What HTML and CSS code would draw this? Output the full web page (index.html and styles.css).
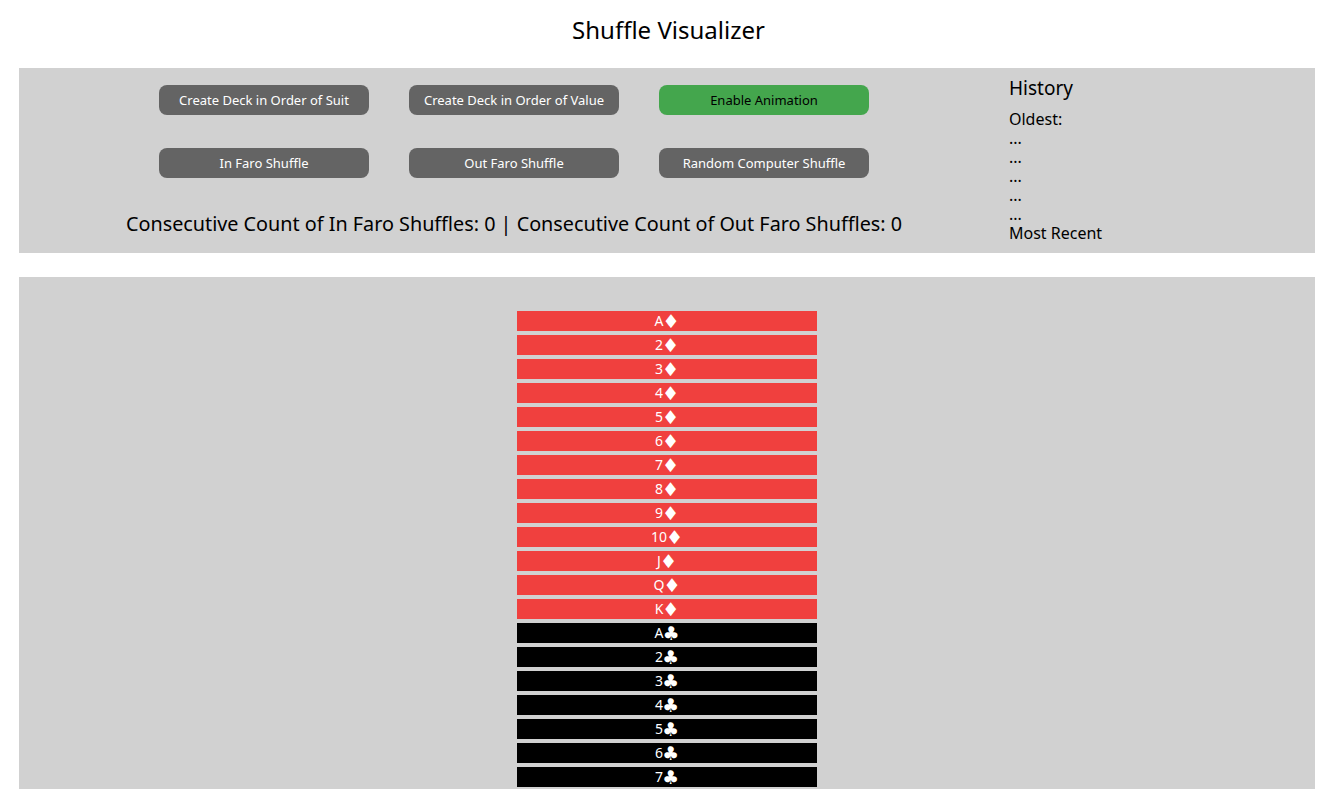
FILE: index.html
```html
<!DOCTYPE html>
<html>
<head>
<meta charset="utf-8">
<title>Shuffle Visualizer</title>
<link rel="stylesheet" href="styles.css">
</head>
<body>
<h1 class="title">Shuffle Visualizer</h1>
<section class="panel controls">
  <div class="main">
    <div class="buttons">
      <button class="btn">Create Deck in Order of Suit</button>
      <button class="btn">Create Deck in Order of Value</button>
      <button class="btn btn-green">Enable Animation</button>
      <button class="btn">In Faro Shuffle</button>
      <button class="btn">Out Faro Shuffle</button>
      <button class="btn">Random Computer Shuffle</button>
    </div>
    <p class="count">Consecutive Count of In Faro Shuffles: 0 | Consecutive Count of Out Faro Shuffles: 0</p>
  </div>
  <div class="history">
    <h2 class="history-title">History</h2>
    <ul class="history-list">
      <li>Oldest:</li>
      <li>...</li>
      <li>...</li>
      <li>...</li>
      <li>...</li>
      <li>...</li>
      <li>Most Recent</li>
    </ul>
  </div>
</section>
<section class="panel deck">
  <div class="card red">A<span class="suit">♦</span></div>
  <div class="card red">2<span class="suit">♦</span></div>
  <div class="card red">3<span class="suit">♦</span></div>
  <div class="card red">4<span class="suit">♦</span></div>
  <div class="card red">5<span class="suit">♦</span></div>
  <div class="card red">6<span class="suit">♦</span></div>
  <div class="card red">7<span class="suit">♦</span></div>
  <div class="card red">8<span class="suit">♦</span></div>
  <div class="card red">9<span class="suit">♦</span></div>
  <div class="card red">10<span class="suit">♦</span></div>
  <div class="card red">J<span class="suit">♦</span></div>
  <div class="card red">Q<span class="suit">♦</span></div>
  <div class="card red">K<span class="suit">♦</span></div>
  <div class="card black">A<span class="suit">♣</span></div>
  <div class="card black">2<span class="suit">♣</span></div>
  <div class="card black">3<span class="suit">♣</span></div>
  <div class="card black">4<span class="suit">♣</span></div>
  <div class="card black">5<span class="suit">♣</span></div>
  <div class="card black">6<span class="suit">♣</span></div>
  <div class="card black">7<span class="suit">♣</span></div>
  <div class="card black">8<span class="suit">♣</span></div>
  <div class="card black">9<span class="suit">♣</span></div>
  <div class="card black">10<span class="suit">♣</span></div>
  <div class="card black">J<span class="suit">♣</span></div>
  <div class="card black">Q<span class="suit">♣</span></div>
  <div class="card black">K<span class="suit">♣</span></div>
  <div class="card red">A<span class="suit">♥</span></div>
  <div class="card red">2<span class="suit">♥</span></div>
  <div class="card red">3<span class="suit">♥</span></div>
  <div class="card red">4<span class="suit">♥</span></div>
  <div class="card red">5<span class="suit">♥</span></div>
  <div class="card red">6<span class="suit">♥</span></div>
  <div class="card red">7<span class="suit">♥</span></div>
  <div class="card red">8<span class="suit">♥</span></div>
  <div class="card red">9<span class="suit">♥</span></div>
  <div class="card red">10<span class="suit">♥</span></div>
  <div class="card red">J<span class="suit">♥</span></div>
  <div class="card red">Q<span class="suit">♥</span></div>
  <div class="card red">K<span class="suit">♥</span></div>
  <div class="card black">A<span class="suit">♠</span></div>
  <div class="card black">2<span class="suit">♠</span></div>
  <div class="card black">3<span class="suit">♠</span></div>
  <div class="card black">4<span class="suit">♠</span></div>
  <div class="card black">5<span class="suit">♠</span></div>
  <div class="card black">6<span class="suit">♠</span></div>
  <div class="card black">7<span class="suit">♠</span></div>
  <div class="card black">8<span class="suit">♠</span></div>
  <div class="card black">9<span class="suit">♠</span></div>
  <div class="card black">10<span class="suit">♠</span></div>
  <div class="card black">J<span class="suit">♠</span></div>
  <div class="card black">Q<span class="suit">♠</span></div>
  <div class="card black">K<span class="suit">♠</span></div>
</section>
</body>
</html>
```
FILE: styles.css
```css
html, body {
  margin: 0;
  padding: 0;
  background: #ffffff;
  font-family: "Noto Sans", "DejaVu Sans", sans-serif;
  color: #000;
}

.title {
  margin: 0 0 24px 0;
  padding-top: 16px;
  font-size: 24px;
  line-height: 28px;
  font-weight: 400;
  text-align: center;
}

.panel {
  background: #d1d1d1;
  margin: 0 22px 0 19px;
}

.controls {
  display: grid;
  grid-template-columns: 990px 1fr;
  height: 185px;
  margin-bottom: 24px;
}

.main {
  padding-top: 17px;
  display: flex;
  flex-direction: column;
  align-items: center;
}

.buttons {
  display: grid;
  grid-template-columns: repeat(3, 210px);
  grid-auto-rows: 30px;
  column-gap: 40px;
  row-gap: 33px;
}

.btn {
  border: none;
  border-radius: 8px;
  background: #646464;
  color: #ffffff;
  font-family: inherit;
  font-size: 13px;
  font-weight: 400;
  padding: 0;
  cursor: pointer;
}

.btn-green {
  background: #44a64d;
  color: #000;
}

.count {
  margin: 34px 0 0 0;
  font-size: 19.8px;
  line-height: 24px;
  white-space: nowrap;
}

.history {
  padding-top: 9px;
}

.history-title {
  margin: 0;
  font-size: 19px;
  line-height: 22px;
  font-weight: 400;
}

.history-list {
  list-style: none;
  margin: 11px 0 0 0;
  padding: 0;
  font-size: 16px;
  line-height: 19px;
}

.deck {
  padding-top: 34px;
  display: flex;
  flex-direction: column;
  align-items: center;
  gap: 4px;
  padding-bottom: 34px;
}

.card {
  width: 300px;
  height: 20px;
  line-height: 20px;
  text-align: center;
  color: #fff;
  font-size: 14px;
  font-weight: 400;
  overflow: hidden;
}

.suit {
  font-family: "DejaVu Sans", sans-serif;
  font-size: 19px;
  line-height: 20px;
  margin-left: -1px;
  vertical-align: top;
}

.red {
  background: #f0403e;
}

.black {
  background: #000;
}
```
